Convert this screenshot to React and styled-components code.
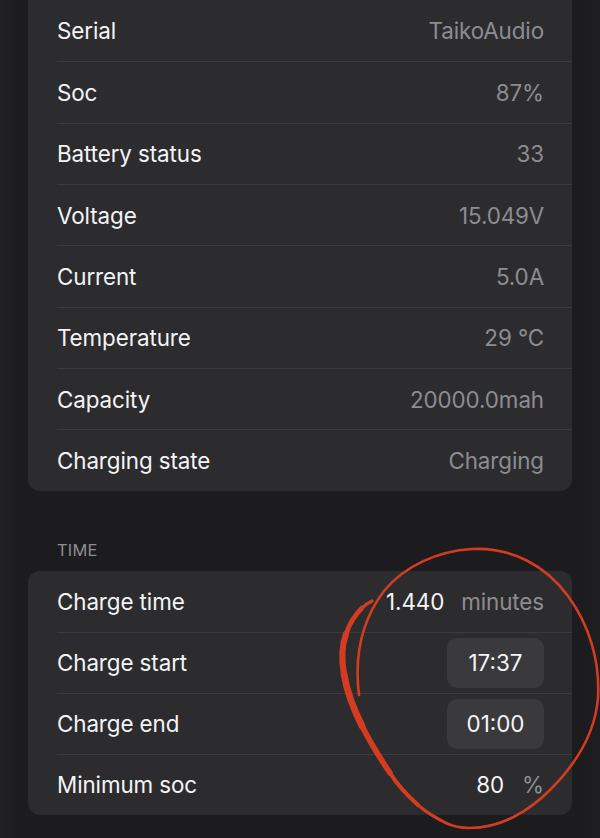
import React from 'react';
import styled, { createGlobalStyle } from 'styled-components';

const GlobalStyle = createGlobalStyle`
  html, body {
    margin: 0;
    padding: 0;
    background: #1c1c1e;
  }
  body {
    font-family: Inter, "Noto Sans", "Liberation Sans", sans-serif;
    -webkit-font-smoothing: antialiased;
  }
`;

const Page = styled.div`
  position: relative;
  width: 600px;
  height: 838px;
  overflow: hidden;
  box-sizing: border-box;
  padding: 0 28px;
  background: linear-gradient(90deg, #212123 0px, #1c1c1e 20px, #1c1c1e 580px, #1e1e20 600px);
`;

const Card = styled.div`
  background: #2c2c2e;
  border-radius: ${p => (p.$clipped ? '0 0 12px 12px' : '12px')};
  overflow: hidden;
`;

const Row = styled.div`
  display: flex;
  align-items: center;
  justify-content: space-between;
  height: ${p => p.$h || 61.3}px;
  box-sizing: border-box;
  margin-left: 29px;
  padding-right: 28px;
  & + & {
    border-top: 1px solid #3b3b3e;
  }
`;

const Label = styled.span`
  font-size: 22.4px;
  color: #f4f4f6;
  letter-spacing: -0.1px;
`;

const Value = styled.span`
  font-size: 22.4px;
  color: ${p => (p.$bright ? '#f4f4f6' : '#8c8c91')};
  letter-spacing: -0.1px;
`;

const ValueGroup = styled.div`
  display: flex;
  align-items: center;
  gap: ${p => p.$gap || 17}px;
`;

const Pill = styled.div`
  display: flex;
  align-items: center;
  justify-content: center;
  width: 97px;
  height: 50px;
  border-radius: 10px;
  background: #3a3a3d;
  font-size: 22.4px;
  color: #f4f4f6;
`;

const SectionHeader = styled.div`
  margin: 49px 0 11px 29px;
  height: 20px;
  line-height: 20px;
  font-size: 16.4px;
  color: #8c8c91;
  letter-spacing: 0.2px;
`;

const Scribble = styled.svg`
  position: absolute;
  left: 0;
  top: 0;
  pointer-events: none;
`;

const info = [
  ['Serial', 'TaikoAudio'],
  ['Soc', '87%'],
  ['Battery status', '33'],
  ['Voltage', '15.049V'],
  ['Current', '5.0A'],
  ['Temperature', '29 °C'],
  ['Capacity', '20000.0mah'],
  ['Charging state', 'Charging'],
];

// thick left-hand part of the hand-drawn loop, drawn in steps so it tapers
const thickParts = [
  [3, 'M446 823 C 436 818, 426 812, 418 805'],
  [4.2, 'M418 805 C 408 796, 398 786, 390 773'],
  [5.6, 'M390 773 C 380 758, 370 742, 362 726'],
  [6.8, 'M362 726 C 354 710, 347 692, 344 674'],
  [6.2, 'M344 674 C 341 658, 342 645, 346 634'],
  [4.6, 'M346 634 C 350 622, 356 614, 362 608'],
  [3.2, 'M362 608 C 365 605, 368 603, 372 601'],
];

export default function App() {
  return (
    <>
      <GlobalStyle />
      <Page>
        <Card $clipped>
          {info.map(([k, v]) => (
            <Row key={k} $h={61.34}>
              <Label>{k}</Label>
              <Value>{v}</Value>
            </Row>
          ))}
        </Card>

        <SectionHeader>TIME</SectionHeader>
        <Card>
          <Row $h={61.1}>
            <Label>Charge time</Label>
            <ValueGroup>
              <Value $bright>1.440</Value>
              <Value>minutes</Value>
            </ValueGroup>
          </Row>
          <Row $h={61.1}>
            <Label>Charge start</Label>
            <Pill>17:37</Pill>
          </Row>
          <Row $h={61.1}>
            <Label>Charge end</Label>
            <Pill>01:00</Pill>
          </Row>
          <Row $h={61.1}>
            <Label>Minimum soc</Label>
            <ValueGroup $gap={18}>
              <Value $bright>80</Value>
              <Value>%</Value>
            </ValueGroup>
          </Row>
        </Card>

        <Scribble width="600" height="838" viewBox="0 0 600 838">
          <g fill="none" stroke="#d33c21" strokeLinecap="round" strokeLinejoin="round">
            <path
              strokeWidth="2.6"
              d="M359 695 C 354 655, 362 620, 384 591 C 404 566, 438 551, 472 549 C 512 547, 546 566, 568 596 C 590 626, 600 662, 598 698 C 595 735, 575 765, 550 790 C 528 812, 500 828, 470 828 C 460 828, 452 826, 446 823"
            />
            {thickParts.map(([w, d]) => (
              <path key={d} strokeWidth={w} d={d} />
            ))}
          </g>
        </Scribble>
      </Page>
    </>
  );
}
